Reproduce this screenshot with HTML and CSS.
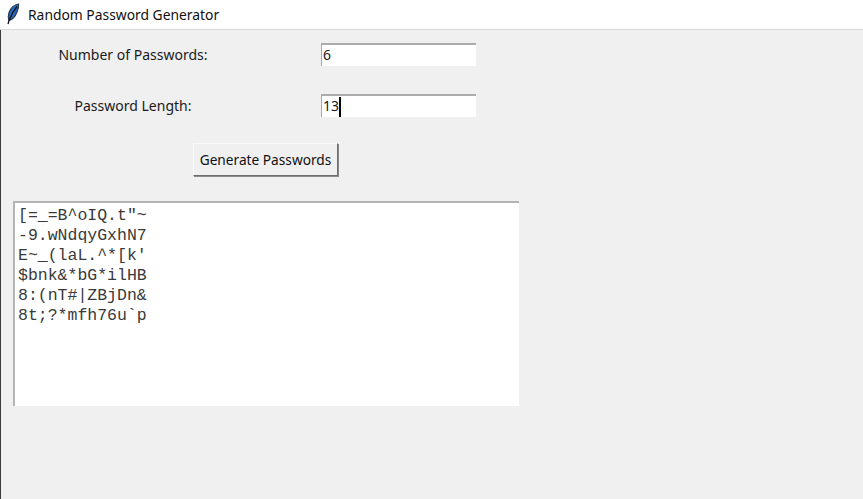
FILE: index.html
```html
<!DOCTYPE html>
<html lang="en">
<head>
<meta charset="utf-8">
<title>Random Password Generator</title>
<link rel="stylesheet" href="styles.css">
</head>
<body>
<div class="window">
  <header class="titlebar">
    <svg class="feather" width="14" height="22" viewBox="0 0 14 22" aria-hidden="true">
      <path d="M12.6 1 C8.5 1.5 4.5 5 3 9.5 C2 12.5 2 15 3 17.5 C6.5 16.5 9.5 13 11 9 C12.2 6 12.9 3 12.6 1 Z" fill="#2a68b8" stroke="#26364c" stroke-width="1.1"/>
      <path d="M11 3.5 C8 7 5.5 11 3.2 17 L2 21" fill="none" stroke="#10151c" stroke-width="1.3"/>
    </svg>
    <span class="title">Random Password Generator</span>
  </header>
  <main class="content">
    <div class="form">
      <label class="label">Number of Passwords:</label>
      <div class="entry">6</div>
      <label class="label">Password Length:</label>
      <div class="entry">13<span class="caret"></span></div>
    </div>
    <div class="actions"><button class="button" type="button">Generate Passwords</button></div>
    <pre class="output">[=_=B^oIQ.t"~
-9.wNdqyGxhN7
E~_(laL.^*[k'
$bnk&amp;*bG*ilHB
8:(nT#|ZBjDn&amp;
8t;?*mfh76u`p</pre>
  </main>
</div>
</body>
</html>
```
FILE: styles.css
```css
* { box-sizing: border-box; }
html, body { margin: 0; height: 100%; }
body { font-family: "Noto Sans", "Open Sans", sans-serif; color: #1a1a1a; overflow: hidden; }
.window { width: 863px; height: 499px; display: flex; flex-direction: column; background: #f0f0f0; border-left: 1px solid #3a3a3a; }
.titlebar { height: 30px; flex: none; display: flex; align-items: center; background: #fff; border-bottom: 1px solid #d9d9d9; padding-left: 6px; margin-left: -1px; }
.feather { flex: none; margin-top: -2px; }
.title { margin-left: 8px; font-size: 13.85px; color: #111; }
.content { flex: 1; display: flex; flex-direction: column; }
.form { display: grid; grid-template-columns: 264px 155px; column-gap: 56px; row-gap: 28px; padding-top: 13px; align-items: center; }
.label { text-align: center; font-size: 14px; }
.entry { height: 23px; background: #fff; border-top: 2px solid #acacac; border-left: 1px solid #a8a8a8; padding-left: 1px; font-size: 14px; line-height: 21px; display: flex; align-items: center; padding-bottom: 2px; }
.caret { width: 2px; height: 20px; background: #000; margin-top: 2px; }
.actions { padding: 26px 0 0 192px; }
.button { display: block; width: 145px; height: 33px; padding: 0; background: #f0f0f0; border: 1px solid; border-color: #fafafa #6e6e6e #6e6e6e #fafafa; box-shadow: 1px 1px 0 #8a8a8a; font: 13.7px "Noto Sans", sans-serif; color: #111; }
.output { width: 506px; height: 205px; margin: 25px 0 0 12px; padding: 3px 0 0 3px; background: #fff; border-top: 2px solid #b4b4b4; border-left: 2px solid #b4b4b4; font: 16.5px/20px "Liberation Mono", monospace; color: #3a3a3a; }
```
